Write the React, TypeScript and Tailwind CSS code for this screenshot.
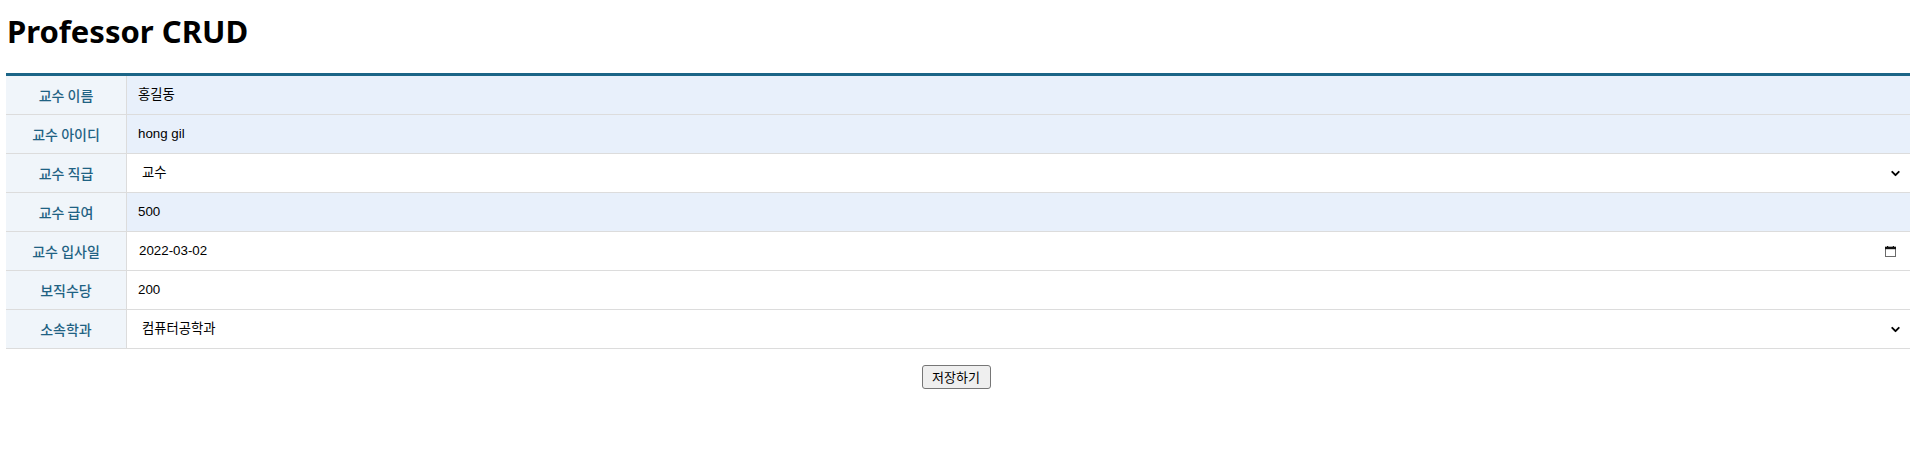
import { ChevronDown } from "lucide-react"

type Row = {
  label: string
  value: string
  kind: "readonly" | "text" | "select" | "date"
}

const rows: Row[] = [
  { label: "교수 이름", value: "홍길동", kind: "readonly" },
  { label: "교수 아이디", value: "hong gil", kind: "readonly" },
  { label: "교수 직급", value: "교수", kind: "select" },
  { label: "교수 급여", value: "500", kind: "readonly" },
  { label: "교수 입사일", value: "2022-03-02", kind: "date" },
  { label: "보직수당", value: "200", kind: "text" },
  { label: "소속학과", value: "컴퓨터공학과", kind: "select" },
]

function CalendarIcon() {
  return (
    <svg width="11" height="11" viewBox="0 0 11 11" className="shrink-0">
      <rect x="0.5" y="1" width="10" height="9.5" fill="none" stroke="#6b6b6b" strokeWidth="1" />
      <rect x="0" y="1" width="11" height="2.2" fill="#111" />
      <rect x="2" y="0" width="1.2" height="2" fill="#111" />
      <rect x="7.8" y="0" width="1.2" height="2" fill="#111" />
    </svg>
  )
}

function ValueCell({ row }: { row: Row }) {
  if (row.kind === "select") {
    return (
      <div className="flex flex-1 items-center justify-between bg-white pl-[15px] pr-[8px]">
        <span>{row.value}</span>
        <ChevronDown className="h-[13px] w-[13px] text-black" strokeWidth={3.5} />
      </div>
    )
  }
  if (row.kind === "date") {
    return (
      <div className="flex flex-1 items-center justify-between bg-white pl-[12px] pr-[14px]">
        <span>{row.value}</span>
        <CalendarIcon />
      </div>
    )
  }
  return (
    <div
      className={`flex flex-1 items-center pl-[11px] ${
        row.kind === "readonly" ? "bg-[#e8f0fb]" : "bg-white"
      }`}
    >
      {row.value}
    </div>
  )
}

export default function App() {
  return (
    <div className="min-h-[476px] bg-white font-['Liberation_Sans','Noto_Sans_CJK_KR',sans-serif] text-black">
      <h1 className="pl-[7px] pt-[11px] font-['Noto_Sans','Noto_Sans_CJK_KR',sans-serif] text-[31px] font-bold leading-[40px]">
        Professor CRUD
      </h1>

      <div className="ml-[6px] mt-[22px] w-[1904px] border-t-[3px] border-[#1b6587]">
        {rows.map((row) => (
          <div key={row.label} className="flex h-[39px] border-b border-[#dcdcdc] text-[13.33px]">
            <div className="flex w-[121px] shrink-0 items-center justify-center border-r border-[#dcdcdc] bg-[#f0f5fa] font-['Noto_Sans_CJK_KR',sans-serif] text-[14px] font-medium text-[#1f6283]">
              {row.label}
            </div>
            <ValueCell row={row} />
          </div>
        ))}
      </div>

      <div className="mt-[16px] flex justify-center">
        <button className="h-[24px] w-[69px] rounded-[3px] border border-[#767676] bg-[#efefef] font-['Noto_Sans_CJK_KR',sans-serif] text-[13px] text-black">
          저장하기
        </button>
      </div>
    </div>
  )
}
